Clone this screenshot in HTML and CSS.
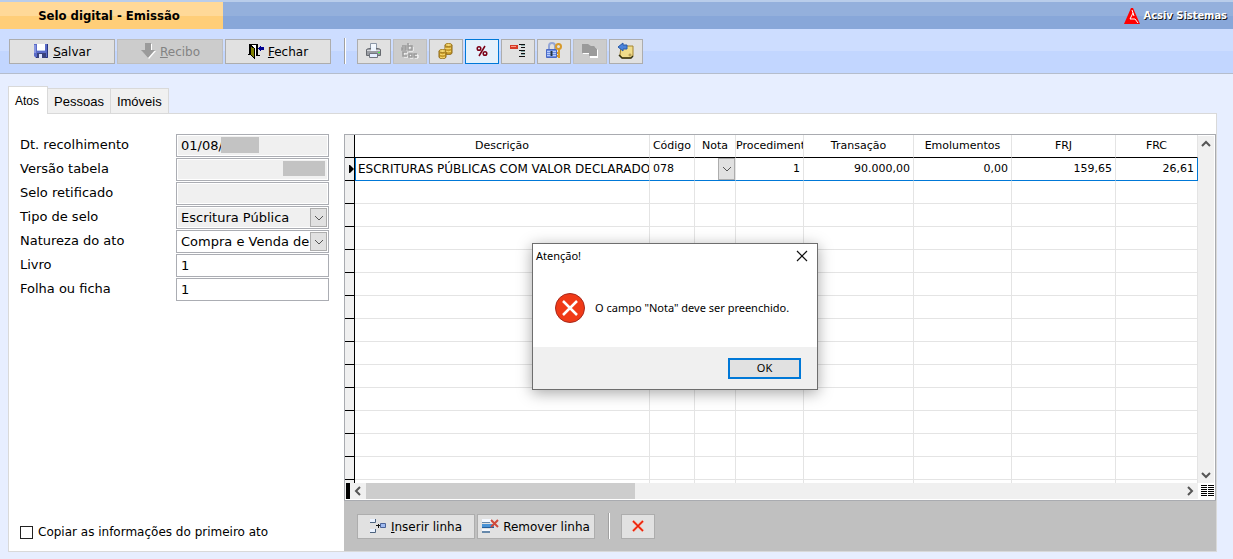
FILE: index.html
```html
<!DOCTYPE html>
<html lang="pt-BR">
<head>
<meta charset="utf-8">
<title>Selo digital - Emissão</title>
<link rel="stylesheet" href="styles.css">
</head>
<body>
<div class="app">
  <header class="titlebar">
    <h1 class="title">Selo digital - Emissão</h1>
    <div class="brand">
      <svg width="16" height="16" viewBox="0 0 16 16"><path d="M7 0h2l7 16H0z" fill="#f00"/><path d="M8 2 9 5 6 11h5l3 4M9 5l1 3" fill="none" stroke="#fff"/></svg>
      <span>Acsiv Sistemas</span>
    </div>
  </header>

  <div class="toolbar">
    <button class="btn wide" type="button">
      <svg width="16" height="16" viewBox="0 0 16 16"><path d="M1 1h14v14H3l-2-2z" fill="#5a6bc8"/><path d="M14.500 1v13.500H3" fill="none" stroke="#29357e"/><path d="M4 1h8v7H4z" fill="#fff"/><path d="M4 7h8v1H4z" fill="#b9c8ee"/><path d="M4 10h9v5H4z" fill="#39427c"/><path d="M6 11h3v4H6z" fill="#dde4ff"/><path d="M1 2h2v8H1z" fill="#8795df"/></svg>
      <span><u>S</u>alvar</span>
    </button>
    <button class="btn wide" type="button" disabled>
      <svg width="16" height="16" viewBox="0 0 16 16"><path d="M6 1h6v7h4l-7 8-7-8h4z" fill="#fff"/><path d="M5 0h6v7h4l-7 8-7-8h4z" fill="#9b9b9b"/></svg>
      <span><u>R</u>ecibo</span>
    </button>
    <button class="btn wide" type="button">
      <svg width="16" height="16" viewBox="0 0 16 16" shape-rendering="crispEdges"><path d="M1 1h9v11h2v1H8V2H3v10H0v-1h1z" fill="#000"/><path d="M3 2h5v10H3z" fill="#fff"/><path d="M2 2l4 3v10l-4-4z" fill="#808000" stroke="#000"/><path d="M10 5l3-3v2h3v3h-3v2z" fill="#000090"/></svg>
      <span><u>F</u>echar</span>
    </button>
    <span class="sep"></span>
    <button class="btn tool" type="button" aria-label="Imprimir">
      <svg width="18" height="18" viewBox="0 0 18 18"><path d="M5.500 1.500h6v6h-6z" fill="#f4f9ff" stroke="#8c98a8"/><path d="M1.500 7.500l2-1h10l2 1v6h-14z" fill="#9a9da3" stroke="#676a70"/><path d="M2 8h13v1H2z" fill="#d8dade"/><path d="M6 5h5v4H6z" fill="#edf5ff"/><path d="M4.500 11.500h8v4h-8z" fill="#e6efff" stroke="#70757e"/><path d="M13 10h2v1h-2z" fill="#4f4"/></svg>
    </button>
    <button class="btn tool" type="button" disabled aria-label="Texto">
      <svg width="18" height="18" viewBox="0 0 18 18"><g fill="none" stroke="#fff" transform="translate(1 1)"><path d="M1 4h4v4H1V6h4M7 1v7h4V4H7M6 10H2v4h4M8 12h3v3H8zM13 12h3v3h-3"/></g><g fill="none" stroke="#999" stroke-width="1.500"><path d="M1 4h4v4H1V6h4M7 1v7h4V4H7M6 10H2v4h4M8 12h3v3H8zM16 12h-3v3h3"/></g></svg>
    </button>
    <button class="btn tool" type="button" aria-label="Valores">
      <svg width="18" height="18" viewBox="0 0 18 18"><g fill="#c79b2b" stroke="#8d6818"><path d="M8 3v8c0 2 7 2 7 0V3z"/><path d="M2 9v6c0 2 7 2 7 0V9z"/></g><g fill="none" stroke="#ffe27a"><path d="M8 6c1 1 5 1 6 0M9 9c1 1 4 1 5 0M3 12c1 1 4 1 5 0M3 15c1 1 4 1 5 0"/></g><g fill="#f6d873" stroke="#a37c20"><ellipse cx="11.500" cy="3" rx="3.500" ry="1.500"/><ellipse cx="5.500" cy="9" rx="3.500" ry="1.500"/></g></svg>
    </button>
    <button class="btn tool active" type="button" aria-label="Percentual">
      <svg width="18" height="18" viewBox="0 0 18 18"><g fill="none" stroke="#7b0016" stroke-width="1.500"><circle cx="6" cy="6.500" r="1.800"/><circle cx="12" cy="11.500" r="1.800"/><path d="M12 4 6 14"/></g></svg>
    </button>
    <button class="btn tool" type="button" aria-label="Linhas">
      <svg width="18" height="18" viewBox="0 0 18 18" shape-rendering="crispEdges"><path d="M1 3h8v4H1z" fill="#d63c28"/><path d="M2 4h5v1H2z" fill="#ff9a85"/><path d="M10 2h6v1h-6zM12 5h4v1h-4zM10 8h6v1h-6zM12 11h4v1h-4zM10 14h6v1h-6z" fill="#111"/><path d="M12 3h4v1h-4zM12 9h4v1h-4zM12 12h4v1h-4z" fill="#8aa"/></svg>
    </button>
    <button class="btn tool" type="button" aria-label="Bloquear">
      <svg width="18" height="18" viewBox="0 0 18 18"><path d="M4 8V4c0-4 6-4 6 0v4" fill="none" stroke="#94a6d6" stroke-width="2"/><path d="M1.500 7.500h10v8h-10z" fill="#6d8ee0" stroke="#4a69c4"/><path d="M2 9.500h9M2 11.500h9M2 13.500h9" stroke="#b7ccff"/><path d="M6.500 9v5" stroke="#234" stroke-width="2"/><circle cx="13.500" cy="4.500" r="2.500" fill="none" stroke="#d79a2b" stroke-width="2"/><path d="M14 7v9m-2-2h2m-2-3h2" fill="none" stroke="#d79a2b" stroke-width="2"/></svg>
    </button>
    <button class="btn tool" type="button" disabled aria-label="Copiar">
      <svg width="18" height="18" viewBox="0 0 18 18"><path d="M2 3h6l3 2h3l3 3v8H9v-4H2z" fill="#fff"/><path d="M1 2h6l3 2h3l3 3v7H8v-3H1z" fill="#9a9a9a"/></svg>
    </button>
    <button class="btn tool" type="button" aria-label="Devolver">
      <svg width="18" height="18" viewBox="0 0 18 18"><path d="M4 4h12v10l-2 2H5l-2-3z" fill="#f0dc8a" stroke="#a4842e"/><path d="M2 13l3 3h9l2-2" fill="none" stroke="#34310f" stroke-width="1.500"/><path d="M1 5l5-4v2h4v4H6v2z" fill="#4a83dc" stroke="#285aa8"/><circle cx="13" cy="13" r="1" fill="#fff" stroke="#a4842e"/></svg>
    </button>
  </div>

  <main class="content">
    <nav class="tabs">
      <button class="tab selected" type="button">Atos</button>
      <button class="tab" type="button">Pessoas</button>
      <button class="tab" type="button">Imóveis</button>
    </nav>

    <div class="panel">
      <form class="side">
        <div class="fields">
          <label for="dt">Dt. recolhimento</label>
          <div class="field"><input id="dt" class="ro" value="01/08/" readonly><i class="mask mask-date"></i></div>
          <label for="versao">Versão tabela</label>
          <div class="field"><input id="versao" class="ro" readonly><i class="mask mask-version"></i></div>
          <label for="selo">Selo retificado</label>
          <div class="field"><input id="selo" class="ro" readonly></div>
          <label for="tipo">Tipo de selo</label>
          <div class="field"><select id="tipo" class="ro"><option>Escritura Pública</option></select><span class="drop"><svg width="10" height="6" viewBox="0 0 10 6"><path d="M1 1l4 4 4-4"/></svg></span></div>
          <label for="natureza">Natureza do ato</label>
          <div class="field"><select id="natureza"><option>Compra e Venda de</option></select><span class="drop"><svg width="10" height="6" viewBox="0 0 10 6"><path d="M1 1l4 4 4-4"/></svg></span></div>
          <label for="livro">Livro</label>
          <div class="field"><input id="livro" value="1"></div>
          <label for="folha">Folha ou ficha</label>
          <div class="field"><input id="folha" value="1"></div>
        </div>
        <label class="check"><input type="checkbox"><span>Copiar as informações do primeiro ato</span></label>
      </form>

      <section class="main">
        <div class="frame">
          <div class="viewport">
            <table class="grid">
              <colgroup><col class="c-mark"><col><col class="c-cod"><col class="c-nota"><col class="c-proc"><col class="c-tran"><col class="c-emol"><col class="c-frj"><col class="c-frc"></colgroup>
              <thead><tr><th></th><th>Descrição</th><th>Código</th><th>Nota</th><th class="cut">Procedimento</th><th>Transação</th><th>Emolumentos</th><th>FRJ</th><th>FRC</th></tr></thead>
              <tbody>
                <tr class="current"><td><svg class="marker" width="5" height="8" viewBox="0 0 5 8"><path d="M0 0h1l4 4-4 4H0z"/></svg></td><td>ESCRITURAS PÚBLICAS COM VALOR DECLARADO</td><td>078</td><td class="combo"><button class="drop" type="button" aria-label="Escolher nota"><svg width="10" height="6" viewBox="0 0 10 6"><path d="M1 1l4 4 4-4"/></svg></button></td><td class="num">1</td><td class="num">90.000,00</td><td class="num">0,00</td><td class="num">159,65</td><td class="num">26,61</td></tr>
                <tr><td></td><td></td><td></td><td></td><td></td><td></td><td></td><td></td><td></td></tr>
                <tr><td></td><td></td><td></td><td></td><td></td><td></td><td></td><td></td><td></td></tr>
                <tr><td></td><td></td><td></td><td></td><td></td><td></td><td></td><td></td><td></td></tr>
                <tr><td></td><td></td><td></td><td></td><td></td><td></td><td></td><td></td><td></td></tr>
                <tr><td></td><td></td><td></td><td></td><td></td><td></td><td></td><td></td><td></td></tr>
                <tr><td></td><td></td><td></td><td></td><td></td><td></td><td></td><td></td><td></td></tr>
                <tr><td></td><td></td><td></td><td></td><td></td><td></td><td></td><td></td><td></td></tr>
                <tr><td></td><td></td><td></td><td></td><td></td><td></td><td></td><td></td><td></td></tr>
                <tr><td></td><td></td><td></td><td></td><td></td><td></td><td></td><td></td><td></td></tr>
                <tr><td></td><td></td><td></td><td></td><td></td><td></td><td></td><td></td><td></td></tr>
                <tr><td></td><td></td><td></td><td></td><td></td><td></td><td></td><td></td><td></td></tr>
                <tr><td></td><td></td><td></td><td></td><td></td><td></td><td></td><td></td><td></td></tr>
                <tr><td></td><td></td><td></td><td></td><td></td><td></td><td></td><td></td><td></td></tr>
                <tr><td></td><td></td><td></td><td></td><td></td><td></td><td></td><td></td><td></td></tr>
              </tbody>
            </table>
          </div>
          <div class="vscroll">
            <svg width="16" height="16" viewBox="0 0 16 16"><path d="M4 10l4-4 4 4"/></svg>
            <svg width="16" height="16" viewBox="0 0 16 16"><path d="M4 6l4 4 4-4"/></svg>
          </div>
          <div class="hscroll">
            <i class="split"></i>
            <svg width="16" height="16" viewBox="0 0 16 16"><path d="M10 4L6 8l4 4"/></svg>
            <div class="track"><i class="thumb"></i></div>
            <svg width="16" height="16" viewBox="0 0 16 16"><path d="M6 4l4 4-4 4"/></svg>
          </div>
          <svg class="corner" width="16" height="16" viewBox="0 0 16 16"><path d="M3 2.500h6m1 0h6M3 4.500h6m1 0h6M3 6.500h6m1 0h6M3 8.500h6m1 0h6M3 10.500h6m1 0h6M3 12.500h6m1 0h6"/></svg>
        </div>

        <div class="actions">
          <button class="btn row" type="button">
            <svg width="17" height="16" viewBox="0 0 17 16"><path d="M0 1h6v4H0zM0 11h6v4H0z" fill="#eaf2ff"/><path d="M0 4.500h5.500V1M0 14.500h5.500V11" fill="none" stroke="#4c627d"/><path d="M6 7.500h4M8.500 6v4" stroke="#111"/><path d="M10.500 5.500h5v4h-5z" fill="#9fbaf0" stroke="#4b6398"/></svg>
            <span><u>I</u>nserir linha</span>
          </button>
          <button class="btn row" type="button">
            <svg width="17" height="16" viewBox="0 0 17 16"><path d="M0 1h9v3H0zM0 11h8v3H0z" fill="#f4f8ff"/><path d="M0 4h8v1H0zM0 13h8v2H0z" fill="#68a"/><path d="M0 6h12v4H0z" fill="#4a93d6"/><path d="M0 9h12v1H0z" fill="#245f9c"/><path d="M9 2l7 7m0-7L9 9" stroke="#d04a3a" stroke-width="2"/></svg>
            <span>Remover linha</span>
          </button>
          <span class="sep"></span>
          <button class="btn tool" type="button" aria-label="Cancelar">
            <svg width="14" height="14" viewBox="0 0 14 14"><path d="M2 2l10 10M12 2L2 12" stroke="#ff9a80" stroke-width="2.500"/><path d="M2 2l10 10M12 2L2 12" stroke="#e81e08" stroke-width="1.500"/></svg>
          </button>
        </div>
      </section>
    </div>
  </main>

  <div class="dialog" role="alertdialog" aria-labelledby="dlg-title" aria-describedby="dlg-text">
    <div class="dialog-head">
      <span id="dlg-title">Atenção!</span>
      <button class="close" type="button" aria-label="Fechar aviso"><svg width="12" height="12" viewBox="0 0 12 12"><path d="M1 1l10 10M11 1L1 11" stroke="#111" stroke-width="1.200"/></svg></button>
    </div>
    <div class="dialog-body">
      <svg width="32" height="32" viewBox="0 0 32 32"><circle cx="16" cy="16" r="14.500" fill="#f03a17" stroke="#a8281b"/><path d="M9 9l14 14M23 9L9 23" stroke="#fff" stroke-width="2.500"/></svg>
      <p id="dlg-text">O campo "Nota" deve ser preenchido.</p>
    </div>
    <div class="dialog-foot"><button class="ok" type="button">OK</button></div>
  </div>
</div>
</body>
</html>
```
FILE: styles.css
```css
* { box-sizing: border-box; }
body {
  margin: 0;
  background: #e7eeff;
  color: #000;
  font: 13px/16px Verdana, "DejaVu Sans", sans-serif;
}
button, input, select { font: inherit; color: inherit; margin: 0; border-radius: 0; }
svg { flex: none; display: block; }
.app { position: relative; display: flex; flex-direction: column; min-height: 100vh; }

.titlebar {
  display: flex;
  justify-content: space-between;
  height: 29px;
  border-top: 2px solid #b9cdea;
  background: linear-gradient(#94b0dc 14px, #88a7d9 14px);
}
.title {
  margin: 0;
  width: 223px;
  padding-right: 5px;
  background: linear-gradient(#ffd998 14px, #ffce78 14px);
  font: bold 13px/27px Tahoma, "DejaVu Sans Condensed", "DejaVu Sans", sans-serif;
  text-align: center;
}
.brand {
  display: flex;
  align-items: center;
  gap: 4px;
  padding-right: 6px;
  color: #fff;
  font: bold 11px/16px Tahoma, "DejaVu Sans Condensed", "DejaVu Sans", sans-serif;
  text-shadow: 1px 1px 0 #111;
}

.toolbar {
  display: flex;
  align-items: center;
  gap: 2px;
  height: 45px;
  padding: 0 9px;
  border-bottom: 1px solid #b5bdcc;
  background: linear-gradient(#cdddff 22px, #c2d6ff 22px);
}
.btn {
  display: flex;
  align-items: center;
  justify-content: center;
  gap: 4px;
  height: 25px;
  padding: 0;
  border: 1px solid #adadad;
  background: #e1e1e1;
  font-size: 12px;
}
.btn span { padding-top: 2px; }
.btn:disabled { background: #ccc; border-color: #bfbfbf; color: #838383; }
.btn.active { border-color: #0078d7; background: #e5f1fb; }
.wide { width: 106px; }
.tool { width: 34px; }
.row { width: 118px; }
.sep { width: 2px; height: 26px; margin: 0 9px 0 11px; border-left: 1px solid #a0a0a0; border-right: 1px solid #fff; }

.content { flex: 1; display: flex; flex-direction: column; padding: 12px 16px 7px 8px; }
.tabs { display: flex; align-items: flex-end; height: 27px; font: 12px/16px "Liberation Sans", Arial, sans-serif; }
.tab { height: 25px; padding: 2px 6px 0; border: 1px solid #d9d9d9; border-bottom: 0; border-left: 0; background: #f0f0f0; font-size: 13px; }
.tab.selected { position: relative; height: 28px; margin-bottom: -1px; padding: 0 8px 0 6px; border-left: 1px solid #d9d9d9; background: #fff; font-size: 12px; }
.panel { flex: 1; display: flex; border: 1px solid #d9d9d9; background: #fff; padding-top: 20px; }

.side { width: 335px; display: flex; flex-direction: column; justify-content: space-between; padding: 0 15px 11px 11px; }
.fields { display: grid; grid-template-columns: 156px 1fr; row-gap: 1px; }
.fields label { line-height: 21px; }
.field { position: relative; height: 23px; }
.field input, .field select {
  appearance: none;
  display: block;
  width: 100%;
  height: 23px;
  padding: 0 4px;
  border: 1px solid #abadb3;
  outline: 1px solid #fff;
  outline-offset: -2px;
  background: #fff;
}
.field .ro { background: #f0f0f0; }
.mask { position: absolute; background: #c3c3c3; }
.mask-date { left: 45px; top: 3px; width: 38px; height: 16px; }
.mask-version { right: 4px; top: 3px; width: 42px; height: 15px; }
.drop {
  display: grid;
  place-items: center;
  width: 17px;
  padding: 0;
  border: 1px solid #adadad;
  background: #e1e1e1;
}
.drop path { fill: none; stroke: #555; stroke-width: 1; }
.field .drop { position: absolute; top: 2px; right: 2px; height: 19px; pointer-events: none; }
.check { display: flex; align-items: center; gap: 5px; font-size: 12px; }
.check input { appearance: none; width: 13px; height: 13px; border: 1px solid #222; background: #fff; }

.main { flex: 1; min-width: 0; display: flex; flex-direction: column; background: #c0c0c0; }
.frame {
  flex: 1;
  display: grid;
  grid-template-columns: minmax(0, 1fr) 16px;
  grid-template-rows: minmax(0, 1fr) 16px;
  border: 1px solid #a9abb0;
  padding: 0 1px 1px 0;
  background: #fff;
}
.viewport { overflow: hidden; height: 0; min-height: 100%; }
.grid { width: 100%; table-layout: fixed; border-collapse: separate; border-spacing: 0; font-size: 11px; }
.c-mark { width: 10px; }
.c-cod { width: 45px; }
.c-nota { width: 41px; }
.c-proc { width: 68px; }
.c-tran { width: 110px; }
.c-emol { width: 98px; }
.c-frj { width: 104px; }
.c-frc { width: 82px; }
.grid th, .grid td {
  height: 23px;
  padding: 0 3px;
  border-right: 1px solid #e4e4e4;
  border-bottom: 1px solid #e4e4e4;
  line-height: 20px;
  white-space: nowrap;
  overflow: hidden;
}
.grid th { font-weight: normal; padding: 0 1px; border-bottom-color: #000; }
.grid th.cut { padding: 0; text-align: left; }
.grid th:first-child, .grid td:first-child { padding: 0; border-right-color: #000; border-bottom-color: #000; background: #f0f0f0; }
.grid .num { text-align: right; }
.grid .current td { border-bottom-color: #0078d7; }
.grid .current td:first-child { border-bottom-color: #000; }
.grid .current td:nth-child(2) { border-left: 1px solid #0078d7; padding: 0 0 0 2px; font-size: 12px; }
.grid .current td:last-child { border-right-color: #0078d7; }
.marker { margin-left: auto; }
.grid .combo { padding: 0; }
.combo .drop { height: 22px; margin-left: auto; }

.vscroll { display: flex; flex-direction: column; justify-content: space-between; margin-top: 1px; background: #f0f0f0; }
.hscroll { display: flex; padding-left: 1px; background: #f0f0f0; }
.vscroll path, .hscroll path { fill: none; stroke: #555; stroke-width: 2; }
.split { width: 4px; background: #000; }
.track { flex: 1; display: flex; }
.thumb { width: 33%; background: #cdcdcd; }
.corner path { stroke: #000; }

.actions { display: flex; align-items: center; gap: 2px; height: 50px; padding-left: 13px; }

.dialog {
  position: absolute;
  left: 532px;
  top: 243px;
  width: 286px;
  border: 1px solid #6e6e6e;
  background: #fff;
  box-shadow: 0 3px 14px rgba(0, 0, 0, .35);
  font: 11px/16px "Segoe UI", "Noto Sans", sans-serif;
}
.dialog-head { display: flex; justify-content: space-between; align-items: center; height: 24px; padding: 0 9px 0 3px; }
.close { padding: 0; border: 0; background: none; }
.dialog-body { display: flex; align-items: center; gap: 9px; height: 79px; padding-left: 21px; }
.dialog-body p { margin: 0; }
.dialog-foot { display: flex; justify-content: flex-end; align-items: center; height: 42px; padding-right: 16px; background: #f0f0f0; }
.ok { width: 73px; height: 21px; padding: 0; border: 2px solid #0078d7; background: #e1e1e1; }
```
